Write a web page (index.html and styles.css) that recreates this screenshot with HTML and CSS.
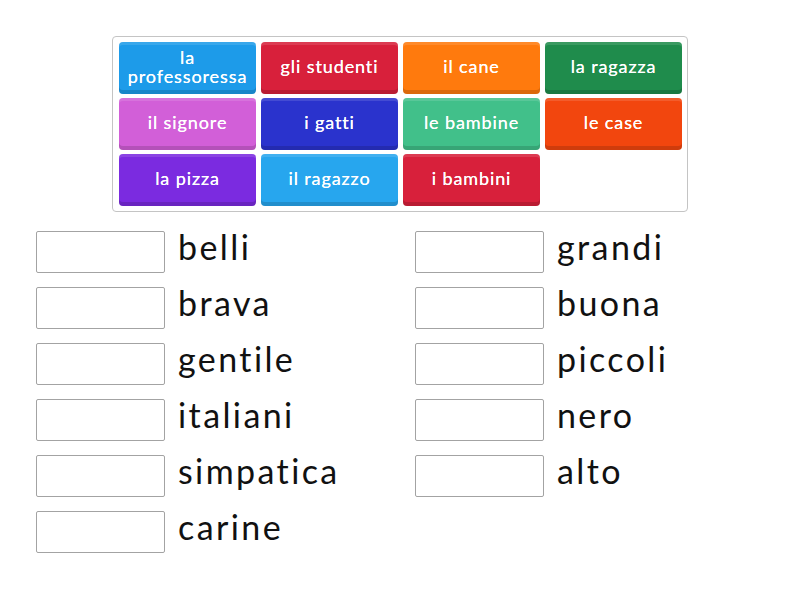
FILE: index.html
```html
<!DOCTYPE html>
<html lang="it">

<head>
    <meta charset="UTF-8">
    <title>Abbinamento</title>
    <link rel="stylesheet" href="styles.css">
</head>

<body>
    <div class="page">
        <div class="bank">
            <div class="tile c1">la professoressa</div>
            <div class="tile c2">gli studenti</div>
            <div class="tile c3">il cane</div>
            <div class="tile c4">la ragazza</div>
            <div class="tile c5">il signore</div>
            <div class="tile c6">i gatti</div>
            <div class="tile c7">le bambine</div>
            <div class="tile c8">le case</div>
            <div class="tile c9">la pizza</div>
            <div class="tile c10">il ragazzo</div>
            <div class="tile c2">i bambini</div>
        </div>

        <div class="answers">
            <div class="col">
                <div class="row"><div class="slot"></div><span>belli</span></div>
                <div class="row"><div class="slot"></div><span>brava</span></div>
                <div class="row"><div class="slot"></div><span>gentile</span></div>
                <div class="row"><div class="slot"></div><span>italiani</span></div>
                <div class="row"><div class="slot"></div><span>simpatica</span></div>
                <div class="row"><div class="slot"></div><span>carine</span></div>
            </div>
            <div class="col">
                <div class="row"><div class="slot"></div><span>grandi</span></div>
                <div class="row"><div class="slot"></div><span>buona</span></div>
                <div class="row"><div class="slot"></div><span>piccoli</span></div>
                <div class="row"><div class="slot"></div><span>nero</span></div>
                <div class="row"><div class="slot"></div><span>alto</span></div>
            </div>
        </div>
    </div>
</body>

</html>
```

FILE: styles.css
```css
* {
    margin: 0;
    padding: 0;
    box-sizing: border-box;
}

body {
    background: #fff;
    font-family: Lato, "Noto Sans", sans-serif;
}

.page {
    padding-top: 36px;
}

.bank {
    width: 576px;
    margin-left: 112px;
    border: 1px solid #c4c4c4;
    border-radius: 4px;
    padding: 5px 5px 5px 6px;
    display: grid;
    grid-template-columns: repeat(4, 137px);
    column-gap: 5px;
    row-gap: 4px;
}

.tile {
    height: 52px;
    border-radius: 4px;
    color: #fff;
    font-size: 18px;
    line-height: 19px;
    letter-spacing: 0.9px;
    display: flex;
    align-items: center;
    justify-content: center;
    text-align: center;
    padding: 0 4px 3px;
    box-shadow: inset 0 -4px 0 rgba(0, 0, 0, 0.14), inset 0 3px 0 rgba(255, 255, 255, 0.12);
    text-shadow: 0 0 0.4px #fff;
}

.c1 { background: #1d9be9; }
.c2 { background: #d8203b; }
.c3 { background: #ff7a0d; }
.c4 { background: #1f8c4c; }
.c5 { background: #d25fd8; }
.c6 { background: #2a33cd; }
.c7 { background: #41c08a; }
.c8 { background: #f2460e; }
.c9 { background: #7b2be0; }
.c10 { background: #27a6ee; }

.answers {
    display: flex;
    padding-left: 36px;
    padding-top: 19px;
}

.col {
    width: 379px;
    display: flex;
    flex-direction: column;
    gap: 14px;
}

.row {
    display: flex;
    align-items: center;
    height: 42px;
}

.slot {
    width: 129px;
    height: 42px;
    border: 1px solid #a3a3a3;
    border-radius: 2px;
    margin-right: 13px;
}

.row span {
    font-size: 34px;
    letter-spacing: 2.4px;
    color: #111;
    padding-bottom: 11px;
}
```
